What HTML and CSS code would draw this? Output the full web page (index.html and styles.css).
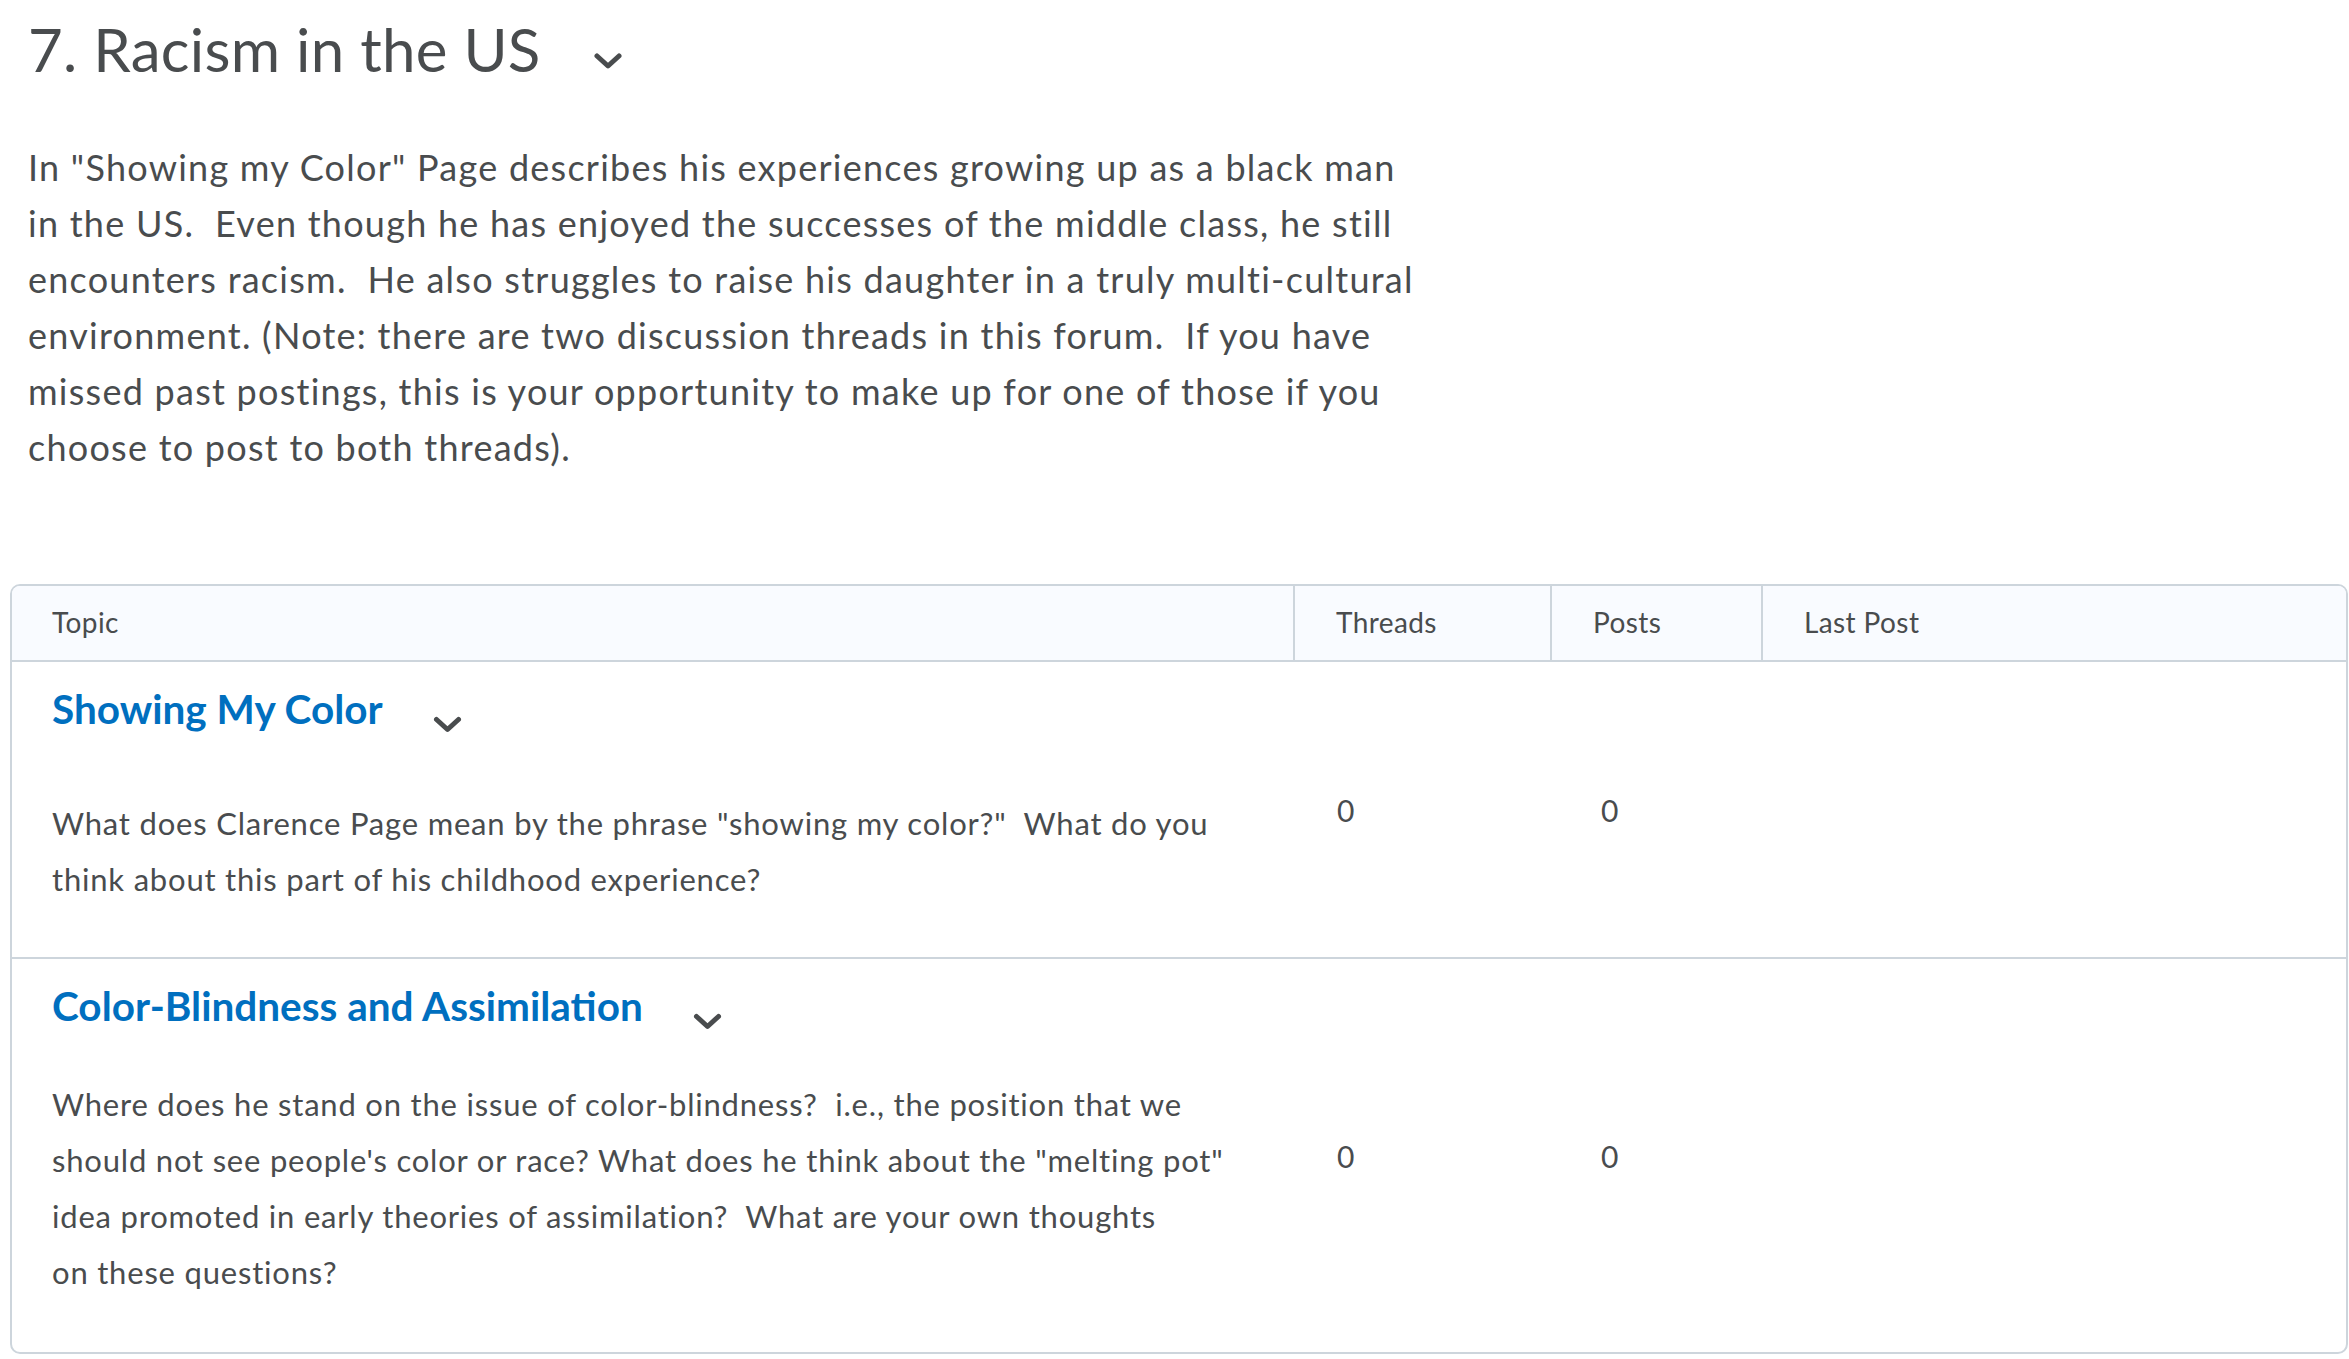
FILE: index.html
```html
<!DOCTYPE html>
<html lang="en">
<head>
  <meta charset="UTF-8">
  <title>7. Racism in the US</title>
  <link rel="stylesheet" href="styles.css">
</head>
<body>

  <!-- Forum heading -->
  <h1 class="forum-title">7. Racism in the US<svg class="chevron chevron-title" viewBox="0 0 28 16" width="28" height="16"><path d="M3 3 L14 13 L25 3"/></svg></h1>

  <div class="forum-intro">
    In "Showing my Color" Page describes his experiences growing up as a black man in the US.&nbsp; Even though he has enjoyed the successes of the middle class, he still encounters racism.&nbsp; He also struggles to raise his daughter in a truly multi-cultural environment. (Note: there are two discussion threads in this forum.&nbsp; If you have missed past postings, this is your opportunity to make up for one of those if you choose to post to both threads).
  </div>

  <!-- Topics -->
  <div class="topic-box">
    <table class="topics">
      <colgroup>
        <col class="col-topic">
        <col class="col-threads">
        <col class="col-posts">
        <col class="col-last">
      </colgroup>
      <thead>
        <tr>
          <th>Topic</th>
          <th>Threads</th>
          <th>Posts</th>
          <th>Last Post</th>
        </tr>
      </thead>
      <tbody>
        <tr>
          <td>
            <div class="topic-title"><a href="#">Showing My Color</a><svg class="chevron" viewBox="0 0 29 17" width="29" height="17"><path d="M3.5 3.5 L14.5 13.5 L25.5 3.5"/></svg></div>
            <div class="topic-desc spaced">What does Clarence Page mean by the phrase "showing my color?"&nbsp; What do you think about this part of his childhood experience?</div>
          </td>
          <td class="count">0</td>
          <td class="count posts">0</td>
          <td class="count"></td>
        </tr>
        <tr>
          <td>
            <div class="topic-title"><a href="#">Color-Blindness and Assimilation</a><svg class="chevron" viewBox="0 0 29 17" width="29" height="17"><path d="M3.5 3.5 L14.5 13.5 L25.5 3.5"/></svg></div>
            <div class="topic-desc">Where does he stand on the issue of color-blindness?&nbsp; i.e., the position that we should not see people's color or race? What does he think about the "melting pot" idea promoted in early theories of assimilation?&nbsp; What are your own thoughts<br>on these questions?</div>
          </td>
          <td class="count">0</td>
          <td class="count posts">0</td>
          <td class="count"></td>
        </tr>
      </tbody>
    </table>
  </div>

</body>
</html>
```

FILE: styles.css
```css
html, body {
  margin: 0;
  padding: 0;
}

body {
  font-family: 'Lato', 'Liberation Sans', sans-serif;
  color: #494c4e;
  background: #fff;
  padding-top: 13px;
}

.forum-title {
  margin: 0;
  padding-left: 28px;
  font-size: 60px;
  font-weight: 400;
  line-height: 72px;
  letter-spacing: 0.3px;
}

.chevron {
  fill: none;
  stroke: #494c4e;
  stroke-width: 5;
  stroke-linecap: round;
  stroke-linejoin: round;
  margin-left: 50px;
  vertical-align: -9px;
}

.chevron-title {
  margin-left: 53px;
  vertical-align: 3px;
}

.forum-intro {
  margin-top: 54px;
  padding-left: 28px;
  width: 1392px;
  font-size: 36px;
  line-height: 56px;
  letter-spacing: 1.25px;
}

.topic-box {
  margin: 109px 1px 0 10px;
  border: 2px solid #cdd5dc;
  border-radius: 10px;
  overflow: hidden;
}

.topics {
  width: 100%;
  border-collapse: collapse;
  table-layout: fixed;
}

.col-topic { width: 1282px; }
.col-threads { width: 257px; }
.col-posts { width: 211px; }

.topics th {
  background: #f9fbff;
  font-size: 28px;
  font-weight: 400;
  line-height: 42px;
  letter-spacing: 0.4px;
  text-align: left;
  padding: 15px 41px 17px;
  border-bottom: 2px solid #cdd5dc;
}

.topics th:first-child {
  padding-left: 40px;
}

.topics th + th {
  border-left: 2px solid #cdd5dc;
}

.topics td {
  padding: 22px 41px 50px 40px;
  vertical-align: top;
  border-bottom: 2px solid #cdd5dc;
}

.topics tr:last-child td {
  border-bottom: none;
}

.topics td.count {
  padding: 0 41px 0 43px;
  vertical-align: middle;
  font-size: 30px;
  line-height: 56px;
}

.topics td.posts {
  padding-left: 50px;
}

.topic-title {
  font-size: 40.5px;
  font-weight: 700;
  line-height: 50px;
}

.topic-title a {
  color: #006fbf;
  text-decoration: none;
}

.topic-desc {
  margin: 45px 0 2px;
  font-size: 31px;
  line-height: 56px;
  letter-spacing: 0.8px;
}

.topic-desc.spaced {
  margin: 61px 0 0;
}
```
